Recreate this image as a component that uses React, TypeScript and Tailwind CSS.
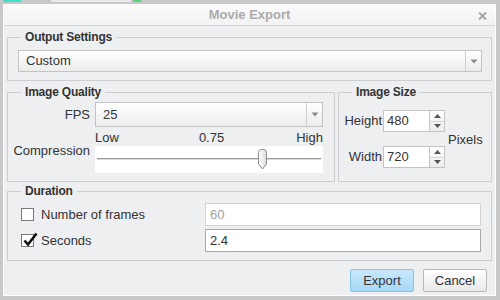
import React from 'react';

function Legend({ children }: { children: React.ReactNode }) {
  return (
    <legend className="ml-[13px] px-[4px] text-[12px] leading-[15px] font-bold tracking-[-0.2px] text-[#333]">
      {children}
    </legend>
  );
}

function Arrow() {
  return (
    <svg width="8" height="5" viewBox="0 0 8 5">
      <path d="M0.5 0.5 H7.5 L4 4.5 Z" fill="#8a8a8a" />
    </svg>
  );
}

function SelectBox({ value, className }: { value: string; className: string }) {
  return (
    <div
      className={`flex items-stretch border border-[#c4c4c4] bg-gradient-to-b from-white to-[#ececec] ${className}`}
    >
      <span className="flex-1 flex items-center pl-[7px]">{value}</span>
      <span className="w-[16px] border-l border-[#cfcfcf] flex items-center justify-center">
        <Arrow />
      </span>
    </div>
  );
}

function Spinner() {
  return (
    <div className="w-[15px] h-[22px] flex flex-col border border-l-0 border-[#c4c4c4] bg-gradient-to-b from-white to-[#ececec]">
      <span className="flex-1 flex items-center justify-center border-b border-[#d6d6d6]">
        <svg width="7" height="4" viewBox="0 0 7 4">
          <path d="M3.5 0 L7 4 H0 Z" fill="#555" />
        </svg>
      </span>
      <span className="flex-1 flex items-center justify-center">
        <svg width="7" height="4" viewBox="0 0 7 4">
          <path d="M0 0 H7 L3.5 4 Z" fill="#555" />
        </svg>
      </span>
    </div>
  );
}

function SizeRow({ label, value }: { label: string; value: string }) {
  return (
    <div className="flex items-center h-[22px]">
      <span className="w-[43px] text-right">{label}</span>
      <span className="ml-[1px] w-[47px] h-[22px] border border-[#c4c4c4] bg-white pl-[3px] flex items-center">
        {value}
      </span>
      <Spinner />
    </div>
  );
}

function CheckBox({ checked }: { checked?: boolean }) {
  return (
    <span className="relative block w-[13px] h-[13px] border border-[#7a7a7a] bg-white shrink-0">
      {checked && (
        <svg className="absolute left-[1px] top-[-3px]" width="15" height="15" viewBox="0 0 15 15">
          <path d="M1.5 8.5 L5 12.5 L13.5 1.5" fill="none" stroke="#111" strokeWidth="2.6" />
        </svg>
      )}
    </span>
  );
}

export default function App() {
  return (
    <div className="w-[500px] h-[300px] flex flex-col bg-[#c6c8ca] pl-[3px] pr-[4px] pb-[4px] font-['Liberation_Sans',Arial,sans-serif] text-[13px] text-[#333]">
      <div className="h-[4px] flex items-start">
        <span className="w-[18px] h-[2px] bg-[#3ee0c8]" />
        <span className="ml-[30px] w-[80px] h-[2px] bg-[#e9e9e9]" />
        <span className="ml-[2px] w-[8px] h-[2px] bg-[#5fd07a]" />
      </div>
      <div className="flex-1 flex flex-col border-x border-b border-white bg-[#eeeff0]">
        <div className="h-[22px] relative flex items-center justify-center bg-gradient-to-b from-[#fbfbfb] to-[#f2f2f2] border-b border-[#d4d5d6]">
          <span className="font-bold text-[#ababab] leading-[15px]">Movie Export</span>
          <svg className="absolute right-[8px] top-[8px]" width="9" height="8" viewBox="0 0 9 8">
            <path d="M1 0.5 L8 7.5 M8 0.5 L1 7.5" stroke="#a6a6a6" strokeWidth="2" />
          </svg>
        </div>

        <div className="flex-1 flex flex-col px-[3px]">
          <fieldset className="mt-[4px] border border-[#cdcecf]">
            <Legend>Output Settings</Legend>
            <SelectBox value="Custom" className="mt-[5px] mb-[8px] ml-[10px] mr-[9px] h-[22px]" />
          </fieldset>

          <div className="mt-[4px] flex gap-[3px]">
            <fieldset className="w-[328px] border border-[#cdcecf] pb-[8px]">
              <Legend>Image Quality</Legend>
              <div className="mt-[2px] flex items-center">
                <span className="w-[82px] text-right">FPS</span>
                <SelectBox value="25" className="ml-[5px] w-[228px] h-[25px]" />
              </div>
              <div className="mt-[2px] flex items-center">
                <span className="w-[82px] text-right">Compression</span>
                <div className="ml-[5px] w-[228px] flex flex-col">
                  <div className="h-[17px] flex items-center justify-between leading-[16px]">
                    <span>Low</span>
                    <span className="ml-[8px]">0.75</span>
                    <span>High</span>
                  </div>
                  <div className="relative h-[27px] bg-white flex items-center px-[2px]">
                    <div className="flex-1 h-[2px] border-t border-[#9a9a9a] bg-[#dcdcdc] -mt-[2px]" />
                    <svg className="absolute left-[162px] top-[3px]" width="11" height="21" viewBox="0 0 11 21">
                      <defs>
                        <linearGradient id="th" x1="0" y1="0" x2="1" y2="0">
                          <stop offset="0" stopColor="#ffffff" />
                          <stop offset="1" stopColor="#dcdcdc" />
                        </linearGradient>
                      </defs>
                      <path
                        d="M1.5 3.5 Q1.5 0.5 4.5 0.5 H6.5 Q9.5 0.5 9.5 3.5 V15 L5.5 20 L1.5 15 Z"
                        fill="url(#th)"
                        stroke="#8a8a8a"
                      />
                    </svg>
                  </div>
                </div>
              </div>
            </fieldset>

            <fieldset className="flex-1 border border-[#cdcecf] pb-[12px]">
              <Legend>Image Size</Legend>
              <div className="mt-[10px] flex items-center">
                <div className="flex flex-col gap-[14px]">
                  <SizeRow label="Height" value="480" />
                  <SizeRow label="Width" value="720" />
                </div>
                <span className="ml-[3px] mt-[2px]">Pixels</span>
              </div>
            </fieldset>
          </div>

          <fieldset className="mt-[2px] border border-[#cdcecf] pb-[8px]">
            <Legend>Duration</Legend>
            <div className="mt-[4px] flex items-center">
              <span className="ml-[13px] flex">
                <CheckBox />
              </span>
              <span className="ml-[7px] flex-1">Number of frames</span>
              <span className="w-[276px] h-[23px] mr-[10px] border border-[#d2d2d2] bg-white pl-[4px] flex items-center text-[#a0a0a0]">
                60
              </span>
            </div>
            <div className="mt-[3px] flex items-center">
              <span className="ml-[13px] flex">
                <CheckBox checked />
              </span>
              <span className="ml-[7px] flex-1">Seconds</span>
              <span className="w-[276px] h-[23px] mr-[10px] border border-[#a9a9a9] bg-white pl-[4px] flex items-center">
                2.4
              </span>
            </div>
          </fieldset>

          <div className="mt-[8px] mr-[5px] flex justify-end gap-[9px]">
            <button className="w-[64px] h-[23px] rounded-[2px] border border-[#86c3ea] bg-gradient-to-b from-[#c9e8fb] to-[#a6d8f7] text-[#333]">
              Export
            </button>
            <button className="w-[64px] h-[23px] rounded-[2px] border border-[#b9b9b9] bg-gradient-to-b from-white to-[#e9e9e9] text-[#333]">
              Cancel
            </button>
          </div>
        </div>
      </div>
    </div>
  );
}
